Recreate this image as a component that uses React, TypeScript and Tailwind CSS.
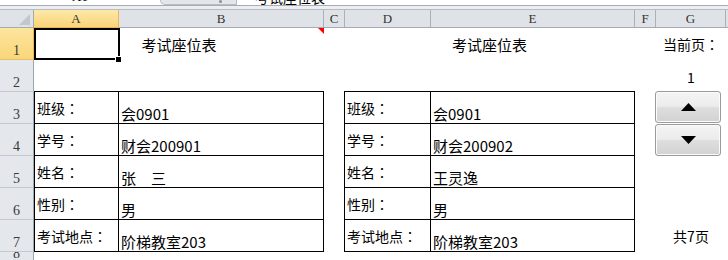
import React from "react";

const cjk = "font-['Noto_Sans_CJK_SC',sans-serif]";
const jp = "font-['Noto_Sans_CJK_JP',sans-serif]";
const hdrFont = "font-['Liberation_Serif',serif]";

const leftRows: [string, string][] = [
  ["班级", "会0901"],
  ["学号", "财会200901"],
  ["姓名", "张　三"],
  ["性别", "男"],
  ["考试地点", "阶梯教室203"],
];
const rightRows: [string, string][] = [
  ["班级", "会0901"],
  ["学号", "财会200902"],
  ["姓名", "王灵逸"],
  ["性别", "男"],
  ["考试地点", "阶梯教室203"],
];

function Colon() {
  return <span className={jp}>：</span>;
}

function RowHead({ n, cls }: { n: string; cls: string }) {
  return (
    <div
      className={
        "w-[34px] shrink-0 flex items-end justify-center pb-[1px] border-r border-[#9ea6b0] text-[14px] leading-none text-[#3a3a3a] " +
        hdrFont +
        " " +
        cls
      }
    >
      {n}
    </div>
  );
}

function Label({ text, cls }: { text: string; cls: string }) {
  return (
    <div className={"shrink-0 flex items-center pl-[2px] border-black text-[14px] leading-none text-black " + cjk + " " + cls}>
      <span>{text}</span>
      <Colon />
    </div>
  );
}

function Value({ text, cls }: { text: string; cls: string }) {
  return (
    <div className={"shrink-0 flex items-end pl-[2px] pb-[1px] border-black text-[15px] leading-[17px] text-black " + cjk + " " + cls}>
      {text}
    </div>
  );
}

export default function App() {
  return (
    <div className="w-[728px] h-[260px] overflow-hidden bg-white select-none">
      {/* formula bar remnant */}
      <div className="h-[6px] flex border-b border-[#a7adb5] bg-white">
        <div className="w-[160px] h-[5px] overflow-hidden flex justify-center">
          <span className={"text-[13px] leading-[14px] -mt-[10px] text-black " + hdrFont}>A1</span>
        </div>
        <div className="w-[76px] h-[5px] bg-[#e3e6ea] rounded-bl-[16px] border-l border-b border-[#b8bdc4] flex justify-end pr-[14px]">
          <div className="w-[3px] h-[3px] bg-[#8a8f96] rounded-full" />
        </div>
        <div className="w-[1px] h-[5px] bg-[#b8bdc4]" />
        <div className="w-[120px] h-[5px] overflow-hidden pl-[18px]">
          <span className={"block text-[14px] leading-[16px] -mt-[11px] text-black " + cjk}>考试座位表</span>
        </div>
      </div>
      <div className="h-[4px] bg-[#eceef1] border-b border-[#b6bcc4]" />

      {/* column headers */}
      <div className={"h-[18px] flex bg-[#dfe3e8] border-b border-[#a3aab3] text-[13px] text-[#333] " + hdrFont}>
        <div className="w-[34px] shrink-0 border-r border-[#a3aab3] flex items-end justify-end pr-[3px] pb-[2px]">
          <svg width="11" height="11" viewBox="0 0 11 11">
            <polygon points="11,0 11,11 0,11" fill="#c2c7ce" />
          </svg>
        </div>
        <div className="w-[85px] shrink-0 flex items-center justify-center bg-[linear-gradient(to_bottom,#fde9a8,#f9d47a)] border-r border-b border-[#e9b55a] -mb-[1px]">A</div>
        <div className="w-[205px] shrink-0 flex items-center justify-center border-r border-[#aab1ba]">B</div>
        <div className="w-[21px] shrink-0 flex items-center justify-center border-r border-[#aab1ba]">C</div>
        <div className="w-[86px] shrink-0 flex items-center justify-center border-r border-[#aab1ba]">D</div>
        <div className="w-[204px] shrink-0 flex items-center justify-center border-r border-[#aab1ba]">E</div>
        <div className="w-[21px] shrink-0 flex items-center justify-center border-r border-[#aab1ba]">F</div>
        <div className="w-[70px] shrink-0 flex items-center justify-center border-r border-[#aab1ba]">G</div>
        <div className="flex-1" />
      </div>

      {/* body */}
      <div className="relative">
        {/* row 1 */}
        <div className="h-[32px] flex">
          <RowHead n="1" cls="bg-[linear-gradient(to_bottom,#fde59e,#f9d679)] border-r-[#e9b55a] border-b border-b-[#e6c070]" />
          <div className="w-[290px] shrink-0 relative flex items-center justify-center">
            <span className={"text-[15px] leading-none text-black " + cjk}>考试座位表</span>
            <div className="absolute left-0 top-0 w-[86px] h-[32px] border-2 border-black" />
            <div className="absolute left-[81px] top-[28px] w-[7px] h-[7px] bg-black border border-white" />
            <svg className="absolute right-0 top-0" width="6" height="6" viewBox="0 0 6 6">
              <polygon points="0,0 6,0 6,6" fill="#ff0000" />
            </svg>
          </div>
          <div className="w-[20px] shrink-0" />
          <div className="w-[291px] shrink-0 flex items-center justify-center">
            <span className={"text-[15px] leading-none text-black " + cjk}>考试座位表</span>
          </div>
          <div className="w-[21px] shrink-0" />
          <div className={"w-[70px] shrink-0 flex items-center justify-center text-[14px] leading-none text-black " + cjk}>
            <span>当前页</span>
            <Colon />
          </div>
        </div>

        {/* row 2 */}
        <div className="h-[31px] flex">
          <RowHead n="2" cls="bg-[#e4e7eb]" />
          <div className="w-[290px] shrink-0" />
          <div className="w-[20px] shrink-0" />
          <div className="w-[291px] shrink-0" />
          <div className="w-[21px] shrink-0" />
          <div className={"w-[70px] shrink-0 flex items-center justify-center pt-[3px] text-[14px] leading-none text-black " + cjk}>1</div>
        </div>

        {/* rows 3-7 */}
        {leftRows.map((lr, i) => {
          const rr = rightRows[i];
          const first = i === 0;
          return (
            <div key={i} className={first ? "h-[33px] flex" : "h-[32px] flex"}>
              <RowHead
                n={String(i + 3)}
                cls={first ? "bg-[#e4e7eb] border-t border-b border-t-[#c4cad2] border-b-[#c4cad2]" : "bg-[#e4e7eb] border-b border-b-[#c4cad2]"}
              />
              <Label text={lr[0]} cls={first ? "w-[85px] border-l border-r border-t border-b" : "w-[85px] border-l border-r border-b"} />
              <Value text={lr[1]} cls={first ? "w-[205px] border-r border-t border-b" : "w-[205px] border-r border-b"} />
              <div className="w-[20px] shrink-0" />
              <Label text={rr[0]} cls={first ? "w-[87px] border-l border-r border-t border-b" : "w-[87px] border-l border-r border-b"} />
              <Value text={rr[1]} cls={first ? "w-[204px] border-r border-t border-b" : "w-[204px] border-r border-b"} />
              <div className="w-[21px] shrink-0" />
              <div className={"w-[70px] shrink-0 flex items-center justify-center text-[14px] leading-none text-black " + cjk}>
                {i === 4 ? "共7页" : ""}
              </div>
            </div>
          );
        })}

        {/* row 8 (partially visible) */}
        <div className="h-[8px] flex">
          <div className={"w-[34px] shrink-0 h-[8px] overflow-hidden flex items-end justify-center bg-[#e4e7eb] border-r border-[#9ea6b0] text-[14px] leading-none text-[#3a3a3a] " + hdrFont}>
            <span className="block -mb-[1px]">8</span>
          </div>
        </div>

        {/* spin buttons */}
        <div className="absolute left-[655px] top-[63px] flex flex-col gap-[1px]">
          <div className="w-[66px] h-[32px] rounded-[3px] border border-[#9a9a9a] bg-[linear-gradient(to_bottom,#f4f4f4_0%,#ececec_48%,#dedede_52%,#d2d2d2_100%)] shadow-[inset_0_0_0_1px_#fbfbfb] flex items-center justify-center">
            <svg width="15" height="8" viewBox="0 0 15 8">
              <polygon points="7.5,0 15,8 0,8" fill="#000" />
            </svg>
          </div>
          <div className="w-[66px] h-[32px] rounded-[3px] border border-[#9a9a9a] bg-[linear-gradient(to_bottom,#f4f4f4_0%,#ececec_48%,#dedede_52%,#d2d2d2_100%)] shadow-[inset_0_0_0_1px_#fbfbfb] flex items-center justify-center">
            <svg width="15" height="8" viewBox="0 0 15 8">
              <polygon points="0,0 15,0 7.5,8" fill="#000" />
            </svg>
          </div>
        </div>
      </div>
    </div>
  );
}
